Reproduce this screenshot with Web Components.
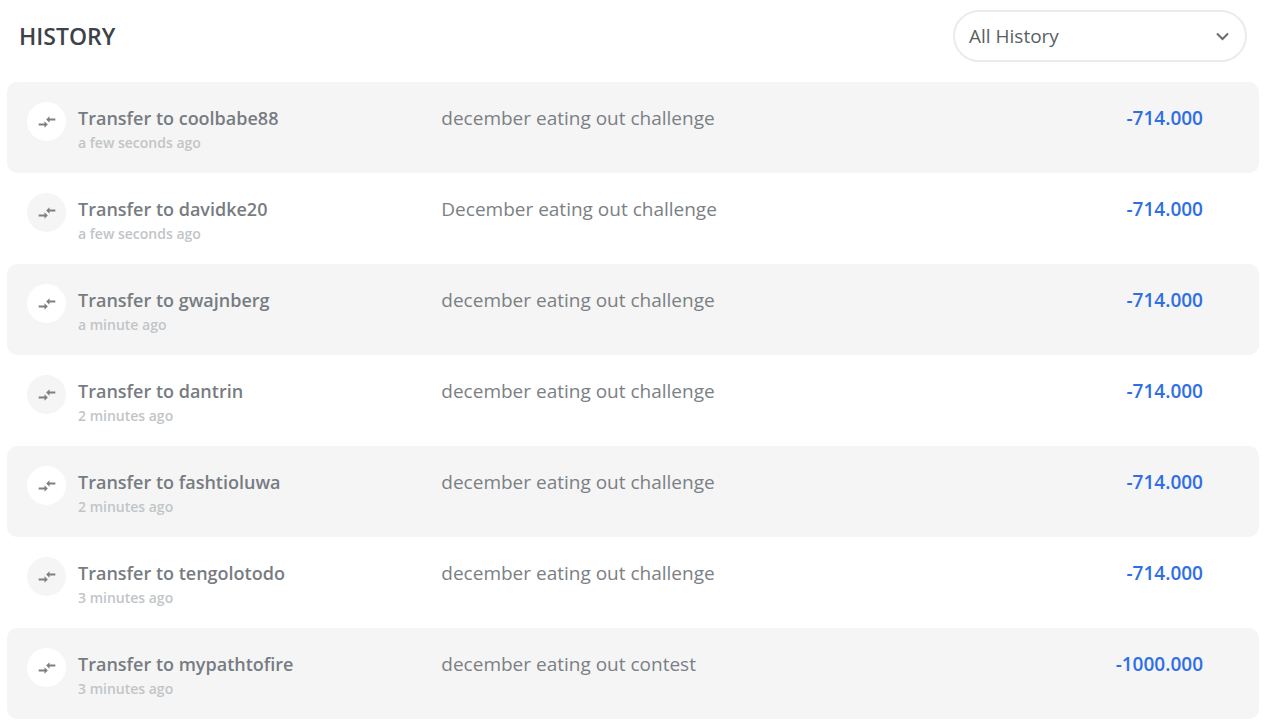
<!DOCTYPE html>
<html lang="en">
<head>
<meta charset="utf-8">
<meta name="viewport" content="width=device-width, initial-scale=1">
<title>History</title>
<style>
  body {
    margin: 0;
    background-color: #fff;
    color: #7b8085;
    font-family: "Segoe UI", "Open Sans", "Noto Sans", sans-serif;
    font-size: 19px;
    line-height: 28px;
  }
</style>
</head>
<body>
<history-page>
  <history-filter slot="filter"></history-filter>
  <history-item name="Transfer to coolbabe88" time="a few seconds ago" amount="-714.000">december eating out challenge</history-item>
  <history-item name="Transfer to davidke20" time="a few seconds ago" amount="-714.000">December eating out challenge</history-item>
  <history-item name="Transfer to gwajnberg" time="a minute ago" amount="-714.000">december eating out challenge</history-item>
  <history-item name="Transfer to dantrin" time="2 minutes ago" amount="-714.000">december eating out challenge</history-item>
  <history-item name="Transfer to fashtioluwa" time="2 minutes ago" amount="-714.000">december eating out challenge</history-item>
  <history-item name="Transfer to tengolotodo" time="3 minutes ago" amount="-714.000">december eating out challenge</history-item>
  <history-item name="Transfer to mypathtofire" time="3 minutes ago" amount="-1000.000">december eating out contest</history-item>
</history-page>

<script>
// Page: title bar on top, the list of transfers below
const $page = document.createElement("template");
$page.innerHTML = /*html*/ `
  <style>
    :host {
      display: block;
      padding: 10px 21px 8px 7px;
    }

    header {
      display: flex;
      align-items: center;
      justify-content: space-between;
      padding: 0 12px;
      margin-bottom: 20px;
    }

    h1 {
      margin: 0;
      color: #3c4248;
      font-size: 23px;
      font-weight: 600;
      line-height: 32px;
    }

    ::slotted(history-item:nth-of-type(odd)) {
      --row-color: #f5f5f5;
      --icon-color: #fff;
    }
  </style>
  <header>
    <h1>HISTORY</h1>
    <slot name="filter"></slot>
  </header>
  <div role="list">
    <slot></slot>
  </div>
`;

class HistoryPage extends HTMLElement {
  constructor() {
    super();
    this.attachShadow({ mode: "open" });
    this.shadowRoot.appendChild($page.content.cloneNode(true));
  }
}

// Filter drop-down
const $filter = document.createElement("template");
$filter.innerHTML = /*html*/ `
  <style>
    :host {
      display: grid;
      align-items: center;
      width: 294px;
    }

    select {
      grid-area: 1 / 1;
      appearance: none;
      box-sizing: border-box;
      width: 100%;
      height: 52px;
      margin: 0;
      padding: 0 44px 0 14px;
      border: 2px solid #e9ebef;
      border-radius: 26px;
      background-color: #fff;
      color: #5b5f63;
      font: inherit;
    }

    svg {
      grid-area: 1 / 1;
      justify-self: end;
      margin-right: 18px;
      pointer-events: none;
    }
  </style>
  <select aria-label="Filter history">
    <option>All History</option>
  </select>
  <svg width="14" height="10" viewBox="0 0 14 10" fill="none" stroke="#6b6b6b" stroke-width="2" aria-hidden="true">
    <path d="M2 2.5 7.5 8 13 2.5"/>
  </svg>
`;

class HistoryFilter extends HTMLElement {
  constructor() {
    super();
    this.attachShadow({ mode: "open" });
    this.shadowRoot.appendChild($filter.content.cloneNode(true));
  }
}

// One transfer
const $item = document.createElement("template");
$item.innerHTML = /*html*/ `
  <style>
    :host {
      display: grid;
      grid-template-columns: repeat(3, 1fr);
      box-sizing: border-box;
      min-height: 91px;
      padding: 20px 0 18px;
      border-radius: 10px;
      background-color: var(--row-color, #fff);
    }

    .who {
      display: flex;
      gap: 12px;
      padding-left: 20px;
    }

    .icon {
      display: flex;
      align-items: center;
      justify-content: center;
      flex: none;
      width: 39px;
      height: 39px;
      border-radius: 50%;
      background-color: var(--icon-color, #f5f5f5);
    }

    .name,
    .amount {
      font-weight: 600;
    }

    .name,
    .time {
      display: block;
    }

    .name {
      color: #777c82;
      font-size: 18px;
    }

    .time {
      color: #c1c5c8;
      font-size: 14px;
      font-weight: 600;
      line-height: 22px;
    }

    .note {
      padding-left: 17px;
    }

    .name,
    .note,
    .amount {
      margin-top: 2px;
      line-height: 28px;
    }

    .amount {
      padding-right: 56px;
      color: #2f6fe4;
      text-align: right;
    }
  </style>
  <div class="who">
    <span class="icon">
      <svg width="20" height="20" viewBox="0 0 24 24" fill="#7b8085" aria-hidden="true">
        <path d="M9 13.8H2v2.4h7v2.6l4-3.800-4-3.800zm6-3.600h7V7.800h-7V5.200L11 9l4 3.800z"/>
      </svg>
    </span>
    <div>
      <span class="name"></span>
      <span class="time"></span>
    </div>
  </div>
  <div class="note"><slot></slot></div>
  <div class="amount"></div>
`;

class HistoryItem extends HTMLElement {
  constructor() {
    super();
    this.attachShadow({ mode: "open" });
    this.shadowRoot.appendChild($item.content.cloneNode(true));
  }

  connectedCallback() {
    this.setAttribute("role", "listitem");
    for (const key of ["name", "time", "amount"]) {
      this.shadowRoot.querySelector("." + key).textContent = this.getAttribute(key);
    }
  }
}

window.customElements.define("history-page", HistoryPage);
window.customElements.define("history-filter", HistoryFilter);
window.customElements.define("history-item", HistoryItem);
</script>
</body>
</html>
